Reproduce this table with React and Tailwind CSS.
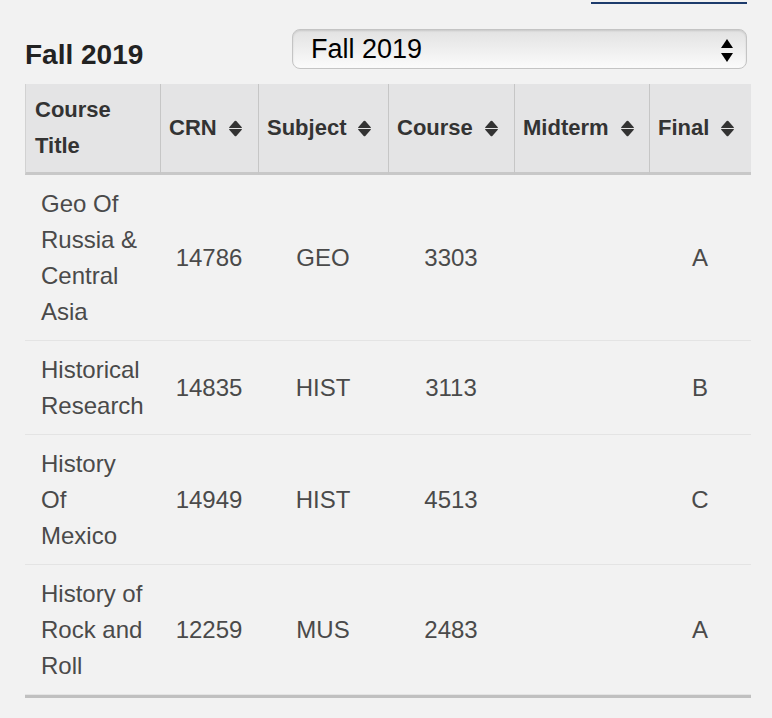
import React from "react";

function SortIcon() {
  return (
    <svg width="15" height="17" viewBox="0 0 15 17" className="inline-block ml-[11px] align-[-2px]">
      <path d="M1.2 7.3 L6.7 1.1 Q7.5 0.3 8.3 1.1 L13.8 7.3 Q14.3 8 13.4 8 L1.6 8 Q0.7 8 1.2 7.3 Z" fill="#333" />
      <path d="M1.2 9.7 L6.7 15.9 Q7.5 16.7 8.3 15.9 L13.8 9.7 Q14.3 9 13.4 9 L1.6 9 Q0.7 9 1.2 9.7 Z" fill="#333" />
    </svg>
  );
}

const rows = [
  { title: "Geo Of Russia & Central Asia", crn: "14786", subject: "GEO", course: "3303", midterm: "", final: "A" },
  { title: "Historical Research", crn: "14835", subject: "HIST", course: "3113", midterm: "", final: "B" },
  { title: "History Of Mexico", crn: "14949", subject: "HIST", course: "4513", midterm: "", final: "C" },
  { title: "History of Rock and Roll", crn: "12259", subject: "MUS", course: "2483", midterm: "", final: "A" },
];

export default function App() {
  return (
    <div className="min-h-[718px] w-[772px] bg-[#f2f2f2] font-['Liberation_Sans',Arial,sans-serif] overflow-hidden">
      <div className="flex justify-end pr-[25px]">
        <a href="#" className="block w-[156px] h-[4px] border-b-2 border-[#1d3b6c]" aria-label="link"></a>
      </div>
      <div className="px-[25px]">
        <div className="flex justify-between items-start mt-[25px]">
          <h2 className="mt-[12px] text-[28px] leading-[28px] font-bold text-[#222]">Fall 2019</h2>
          <div className="relative w-[455px] h-[40px] rounded-[8px] border border-[#c4c4c4] bg-gradient-to-b from-[#e2e2e2] to-[#fbfbfb] shadow-[inset_0_1px_2px_rgba(0,0,0,0.12)] flex items-center pl-[18px]">
            <span className="text-[27px] leading-none text-black">Fall 2019</span>
            <svg width="12" height="24" viewBox="0 0 12 24" className="absolute right-[13px] top-[9px]">
              <path d="M6 0 L12 9 L0 9 Z" fill="#000" />
              <path d="M0 14 L12 14 L6 23 Z" fill="#000" />
            </svg>
          </div>
        </div>
        <div className="mt-[15px] w-[726px] border-b-[3px] border-[#c0c0c0]">
          <table className="w-[726px] table-fixed border-separate border-spacing-0">
            <colgroup>
              <col className="w-[135px]" />
              <col className="w-[98px]" />
              <col className="w-[130px]" />
              <col className="w-[126px]" />
              <col className="w-[135px]" />
              <col className="w-[102px]" />
            </colgroup>
            <thead>
              <tr className="bg-[#e4e4e5]">
                <th className="text-left align-middle pl-[9px] pr-[9px] py-2 text-[22px] leading-[36px] font-bold text-[#333] border-l border-b-[3px] border-l-[#d2d2d2] border-b-[#c8c8c8]">Course Title</th>
                {["CRN", "Subject", "Course", "Midterm", "Final"].map((h) => (
                  <th key={h} className="text-left align-middle pl-[8px] pr-[4px] py-2 text-[22px] leading-[36px] font-bold text-[#333] whitespace-nowrap border-l border-b-[3px] border-l-[#c6c6c6] border-b-[#c8c8c8]">
                    {h}
                    <SortIcon />
                  </th>
                ))}
              </tr>
            </thead>
            <tbody>
              {rows.map((r) => (
                <tr key={r.crn}>
                  <td className="text-left align-middle pl-[16px] pr-[15px] py-[10.5px] text-[24px] leading-[36px] text-[#4a4a4a] border-b border-[#e4e4e4]">{r.title}</td>
                  <td className="text-center align-middle py-[10.5px] text-[24px] leading-[36px] text-[#4a4a4a] border-b border-[#e4e4e4]">{r.crn}</td>
                  <td className="text-center align-middle py-[10.5px] text-[24px] leading-[36px] text-[#4a4a4a] border-b border-[#e4e4e4]">{r.subject}</td>
                  <td className="text-center align-middle py-[10.5px] text-[24px] leading-[36px] text-[#4a4a4a] border-b border-[#e4e4e4]">{r.course}</td>
                  <td className="text-center align-middle py-[10.5px] text-[24px] leading-[36px] text-[#4a4a4a] border-b border-[#e4e4e4]">{r.midterm}</td>
                  <td className="text-center align-middle py-[10.5px] text-[24px] leading-[36px] text-[#4a4a4a] border-b border-[#e4e4e4]">{r.final}</td>
                </tr>
              ))}
            </tbody>
          </table>
        </div>
      </div>
    </div>
  );
}
